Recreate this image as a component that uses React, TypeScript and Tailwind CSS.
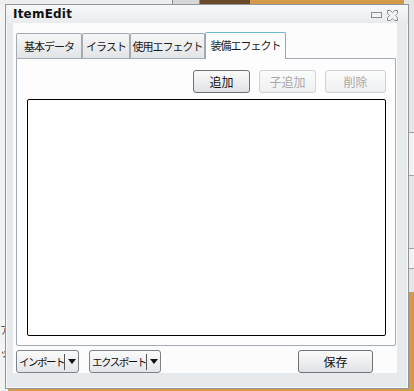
import React from "react";

const jp = { fontFamily: '"Noto Sans CJK JP", "Noto Sans", sans-serif' };

function Tab({ label, w, active }: { label: string; w: number; active?: boolean }) {
  if (active) {
    return (
      <div
        className="relative z-10 -mb-px flex h-[27px] items-start justify-center whitespace-nowrap rounded-t-[2px] border border-b-0 border-[#6cb8d4] bg-[#fdfdfd] pt-[4px] text-[11px] tracking-[-1px] text-[#1a1a1a]"
        style={{ width: w }}
      >
        {label}
      </div>
    );
  }
  return (
    <div
      className="mt-[1px] flex h-[25px] items-center justify-center whitespace-nowrap rounded-t-[2px] border border-b-0 border-[#a3abb4] bg-gradient-to-b from-[#f6f6f6] to-[#e3e4e6] text-[11px] tracking-[-1px] text-[#1a1a1a]"
      style={{ width: w }}
    >
      {label}
    </div>
  );
}

function Btn({ label, w, disabled }: { label: string; w: number; disabled?: boolean }) {
  return (
    <div
      className={
        "flex h-[23px] items-center justify-center whitespace-nowrap rounded-[3px] border text-[12px] " +
        (disabled
          ? "border-[#cfd3d7] bg-gradient-to-b from-[#fbfbfb] to-[#eef0f2] text-[#a9a9a9]"
          : "border-[#6f7378] bg-gradient-to-b from-[#fbfbfb] to-[#dfe2e5] text-[#111]")
      }
      style={{ width: w }}
    >
      {label}
    </div>
  );
}

function SplitBtn({ label, w }: { label: string; w: number }) {
  return (
    <div
      className="flex h-[23px] items-center rounded-[3px] border border-[#7d8288] bg-gradient-to-b from-[#fbfbfb] to-[#e2e5e8] text-[10.5px] text-[#111]"
      style={{ width: w }}
    >
      <span className="flex-1 whitespace-nowrap pl-[2px] tracking-[-1.5px]">{label}</span>
      <span className="h-[16px] w-px bg-[#555]" />
      <span className="flex w-[13px] items-center justify-center">
        <svg width="8" height="5" viewBox="0 0 8 5">
          <path d="M0 0 L8 0 L4 5 Z" fill="#111" />
        </svg>
      </span>
    </div>
  );
}

export default function App() {
  return (
    <div className="relative h-[391px] w-[414px] overflow-hidden bg-[#d49a48]" style={jp}>
      {/* desktop behind */}
      <div className="absolute left-0 top-0 h-[391px] w-[8px] bg-[#f3f3f3]">
        <span className="absolute left-0 top-[325px] text-[10px] leading-none text-[#333]">ア</span>
        <span className="absolute left-0 top-[348px] text-[10px] leading-none text-[#333]">ッ</span>
      </div>
      <div className="absolute left-0 top-0 h-[5px] w-[200px] bg-[#eeeeee]" />
      <div className="absolute left-[172px] top-0 h-[5px] w-[28px] border-x border-[#888] bg-[#d8d8d8]" />
      <div className="absolute left-[200px] top-0 h-[5px] w-[50px] bg-[#6b4a2c]" />
      <div className="absolute right-0 top-0 flex h-[292px] w-[10px] flex-col bg-[#e4e6e8]">
        <div className="h-[133px] border-b border-[#a0a4a8]" />
        <div className="h-[43px] border-b border-[#a0a4a8] bg-[#f2f2f2]" />
        <div className="h-[73px] border-b border-[#a0a4a8]" />
        <div className="h-[20px] border-b border-[#a0a4a8] bg-[#f2f2f2]" />
      </div>

      {/* window */}
      <div className="absolute left-[5px] top-[4px] flex h-[385px] w-[404px] flex-col border border-[#8e959c] bg-[#e7eaed] shadow-[0_0_0_1px_rgba(255,255,255,0.6)_inset]">
        <div className="flex h-[18px] items-center justify-between bg-gradient-to-b from-[#f7f8f9] to-[#e9ebee] pl-[7px] pr-[10px]">
          <span
            className="text-[12px] font-bold text-[#111]"
            style={{ fontFamily: '"DejaVu Sans", sans-serif', letterSpacing: "0.2px" }}
          >
            ItemEdit
          </span>
          <div className="flex items-center gap-[5px] pt-[2px]">
            <svg width="11" height="6" viewBox="0 0 11 6">
              <rect x="0.5" y="0.5" width="10" height="5" fill="#f2f2f2" stroke="#8a8f95" />
            </svg>
            <svg width="11" height="11" viewBox="0 0 11 11">
              <path
                d="M0.5 0.5 H3.5 L5.5 2.5 L7.5 0.5 H10.5 V3.5 L8.5 5.5 L10.5 7.5 V10.5 H7.5 L5.5 8.5 L3.5 10.5 H0.5 V7.5 L2.5 5.5 L0.5 3.5 Z"
                fill="#f2f2f2"
                stroke="#8a8f95"
              />
            </svg>
          </div>
        </div>

        <div className="ml-[7px] mr-[11px] flex h-[350px] flex-col bg-[#fcfcfc] pl-[3px] pr-px pt-[9px]">
          <div className="flex items-end">
            <Tab label="基本データ" w={66} />
            <Tab label="イラスト" w={48} />
            <Tab label="使用エフェクト" w={75} />
            <Tab label="装備エフェクト" w={81} active />
          </div>
          <div className="flex h-[288px] flex-col rounded-b-[2px] border border-[#a3abb4] bg-[#fdfdfd] pb-[9px] pl-[10px] pr-[9px] pt-[11px]">
            <div className="flex justify-end gap-[9px]">
              <Btn label="追加" w={57} />
              <Btn label="子追加" w={57} disabled />
              <Btn label="削除" w={61} disabled />
            </div>
            <div className="mt-[6px] flex-1 rounded-[2px] border border-black bg-white" />
          </div>
          <div className="mt-[4px] flex items-center">
            <SplitBtn label="インポート" w={63} />
            <div className="w-[10px]" />
            <SplitBtn label="エクスポート" w={72} />
            <div className="flex-1" />
            <Btn label="保存" w={75} />
            <div className="w-[23px]" />
          </div>
        </div>
      </div>
    </div>
  );
}
